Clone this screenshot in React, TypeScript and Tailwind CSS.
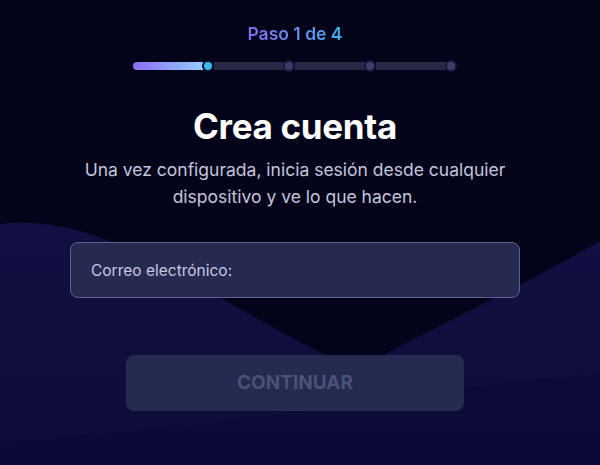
import { useState } from 'react';

// Paso 1 del registro: correo electrónico. El fondo con ondas es un dibujo SVG detrás del contenido.
function WaveBackground() {
  return (
    <svg
      className="absolute inset-0 w-full h-full"
      viewBox="0 0 600 465"
      preserveAspectRatio="none"
      aria-hidden="true"
    >
      <defs>
        <linearGradient id="wave" x1="0" y1="0" x2="0" y2="1">
          <stop offset="0" stopColor="#111042" />
          <stop offset="1" stopColor="#0d0c3a" />
        </linearGradient>
      </defs>
      <path
        d="M0,224 C40,219 85,228 135,252 C205,287 280,334 330,357 L380,357 C445,322 515,290 600,241 L600,465 L0,465 Z"
        fill="url(#wave)"
      />
      <path
        d="M0,442 C140,432 300,414 440,392 C500,382 555,378 600,374 L600,465 L0,465 Z"
        fill="#0b0a34"
        opacity="0.7"
      />
    </svg>
  );
}

const STEPS = 4;
const CURRENT = 1;

export default function App() {
  const [email, setEmail] = useState('');

  return (
    <div
      className="relative w-full h-[465px] overflow-hidden bg-[#03041a]"
      style={{ fontFamily: 'Inter, "Noto Sans", sans-serif' }}
    >
      <WaveBackground />

      <div className="relative flex flex-col items-center pt-[22px] pr-[10px]">
        <p className="text-[17.5px] leading-6 font-semibold bg-gradient-to-r from-[#7d69f2] to-[#3aaeee] bg-clip-text text-transparent">
          Paso 1 de 4
        </p>

        {/* barra de progreso */}
        <div className="mt-[14px] w-[324px] h-3 flex">
          {Array.from({ length: STEPS }).map((_, i) => (
            <div key={i} className="flex-1 flex items-center justify-end">
              <div
                className={
                  i < CURRENT
                    ? 'flex-1 h-2 rounded-l-full bg-gradient-to-r from-[#8b6cf6] to-[#93cdfb]'
                    : 'flex-1 h-2 bg-[#272944]'
                }
              />
              <div
                className={
                  i < CURRENT
                    ? 'w-3 h-3 rounded-full bg-[#38b9f0] border-2 border-[#0d0f2a] -ml-1'
                    : 'w-3 h-3 rounded-full bg-[#3b3d68] border-2 border-[#16173a] -ml-1'
                }
              />
            </div>
          ))}
        </div>

        <h1 className="mt-[34px] text-[35px] leading-10 font-bold text-white tracking-[-0.3px]">
          Crea cuenta
        </h1>
        <p className="mt-[10px] text-[17.5px] leading-[27px] text-[#c3c6dc] text-center w-[450px]">
          Una vez configurada, inicia sesión desde cualquier dispositivo y ve lo que hacen.
        </p>

        <input
          type="email"
          value={email}
          onChange={(e) => setEmail(e.target.value)}
          placeholder="Correo electrónico:"
          className="mt-8 w-[450px] h-14 px-5 rounded-lg bg-[#262a50] border border-[#5d6291] text-[15.5px] text-white placeholder:text-[#c6c9e0] focus:outline-none"
        />

        <button
          disabled
          className="mt-[57px] w-[338px] h-14 rounded-lg bg-[#252a50] text-[19px] font-bold text-[#4b5177]"
        >
          CONTINUAR
        </button>
      </div>
    </div>
  );
}
